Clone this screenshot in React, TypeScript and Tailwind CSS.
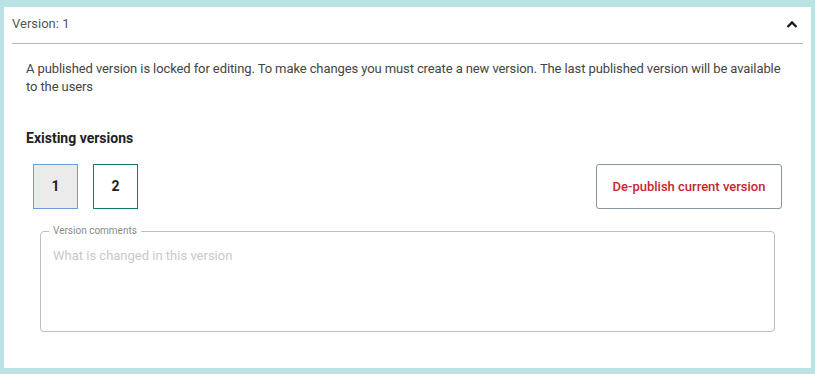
export default function App() {
  const versions = [
    { n: 1, active: true },
    { n: 2, active: false },
  ];

  return (
    <div className="h-[374px] w-[815px] bg-[#bce3e3] pt-[7px] pr-[4px] pb-[6px] pl-[4px] font-['Roboto',sans-serif]">
      <div className="h-full bg-white">
        <div className="flex h-[36px] items-start justify-between pl-2 pr-[13px] pt-[9px]">
          <span className="text-[13px] leading-[16px] text-[#555]">Version: 1</span>
          <svg width="12" height="8" viewBox="0 0 12 8" className="mt-[4px]">
            <polyline points="1.5,7 6,2.5 10.5,7" fill="none" stroke="#1a1a1a" strokeWidth="2.3" />
          </svg>
        </div>
        <div className="mx-2 h-px bg-[#b8b8b8]" />

        <p className="mt-[16px] pl-[22px] pr-[28px] text-[13px] leading-[18px] tracking-[-0.1px] text-[#444]">
          A published version is locked for editing. To make changes you must create a new version. The last published
          version will be available to the users
        </p>

        <h2 className="mt-[32px] px-[22px] text-[14px] font-bold leading-[20px] text-[#222]">Existing versions</h2>

        <div className="mt-[16px] flex items-center justify-between px-[29px]">
          <div className="flex gap-[15px]">
            {versions.map((v) => (
              <button
                key={v.n}
                className={
                  v.active
                    ? "flex h-[45px] w-[45px] items-center justify-center border border-[#6e9ddc] bg-[#ebebeb] text-[14px] font-bold text-[#222]"
                    : "flex h-[45px] w-[45px] items-center justify-center border border-[#117a6f] bg-white text-[14px] font-bold text-[#222]"
                }
              >
                {v.n}
              </button>
            ))}
          </div>
          <button className="h-[45px] w-[186px] rounded-[3px] border border-[#8c949c] text-[13px] font-medium text-[#c8252f]">
            De-publish current version
          </button>
        </div>

        <fieldset className="mx-[36px] mt-[16px] rounded-[4px] border border-[#bdbdbd] pl-[8px] pr-[8px]">
          <legend className="px-[4px] text-[10px] leading-[12px] text-[#8a8a8a]">Version comments</legend>
          <textarea
            placeholder="What is changed in this version"
            className="block h-[94px] w-full resize-none pl-[4px] pt-[10px] text-[13px] leading-[18px] text-[#333] outline-none placeholder:text-[#c8c8c8]"
          />
        </fieldset>
      </div>
    </div>
  );
}
